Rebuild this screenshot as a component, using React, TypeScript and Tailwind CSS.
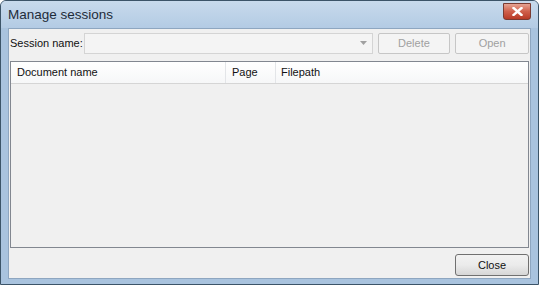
import React from "react";

const font = { fontFamily: "'Liberation Sans', Arial, sans-serif" };

const App: React.FC = () => {
  return (
    <div className="w-[539px] h-[285px] overflow-hidden bg-[#a9c3de] border border-[#3c5468] rounded-t-[6px] flex flex-col text-[11px] text-black" style={font}>
      {/* title bar */}
      <div className="h-[27px] shrink-0 flex items-center justify-between pl-[7px] pr-[7px] bg-gradient-to-b from-[#c8daec] to-[#b3cbe4]">
        <span className="text-[13.5px] text-[#1e2c3a] leading-none">Manage sessions</span>
        <div className="w-[28px] h-[17px] -mt-[6px] rounded-b-[3px] border border-[#7a3b32] bg-gradient-to-b from-[#e5a393] via-[#cf5f4b] to-[#b83a26] flex items-center justify-center">
          <svg width="11" height="9" viewBox="0 0 11 9">
            <path d="M1.5 1 L9.5 8 M9.5 1 L1.5 8" stroke="#fff" strokeWidth="2.4" strokeLinecap="square" />
          </svg>
        </div>
      </div>
      {/* client area */}
      <div className="flex-1 mx-[7px] mb-[5px] border border-[#8ea6c0] bg-[#f0f0f0] flex flex-col px-[1px]">
        <div className="flex items-center h-[27px] pt-[1px]">
          <span className="w-[74px] text-[#111]">Session name:</span>
          <div className="w-[290px] h-[21px] border border-[#d4d4d4] bg-[#f4f4f4] flex items-center justify-end pr-[5px]">
            <svg width="7" height="4" viewBox="0 0 7 4"><path d="M0 0 H7 L3.5 4 Z" fill="#a0a0a0" /></svg>
          </div>
          <button className="ml-[5px] w-[73px] h-[21px] border border-[#c6c6c6] rounded-[2px] bg-[#f4f4f4] text-[#a0a0a0]">Delete</button>
          <button className="ml-[5px] w-[74px] h-[21px] border border-[#c6c6c6] rounded-[2px] bg-[#f4f4f4] text-[#a0a0a0]">Open</button>
        </div>
        <div className="mt-[5px] h-[187px] border border-[#828790] bg-[#f0f0f0] flex flex-col">
          <div className="h-[22px] bg-gradient-to-b from-white to-[#f6f7f8] border-b border-[#d5d5d5] flex items-center text-[#111]">
            <div className="w-[215px] pl-[6px] border-r border-[#e3e5e8] h-full flex items-center">Document name</div>
            <div className="w-[50px] pl-[6px] border-r border-[#e3e5e8] h-full flex items-center">Page</div>
            <div className="flex-1 pl-[5px] h-full flex items-center">Filepath</div>
          </div>
        </div>
        <div className="flex justify-end mt-[6px]">
          <button className="w-[74px] h-[22px] border border-[#707070] rounded-[3px] bg-gradient-to-b from-[#f2f2f2] via-[#ebebeb] to-[#d6d6d6] text-[#111]">Close</button>
        </div>
      </div>
    </div>
  );
};

export default App;
